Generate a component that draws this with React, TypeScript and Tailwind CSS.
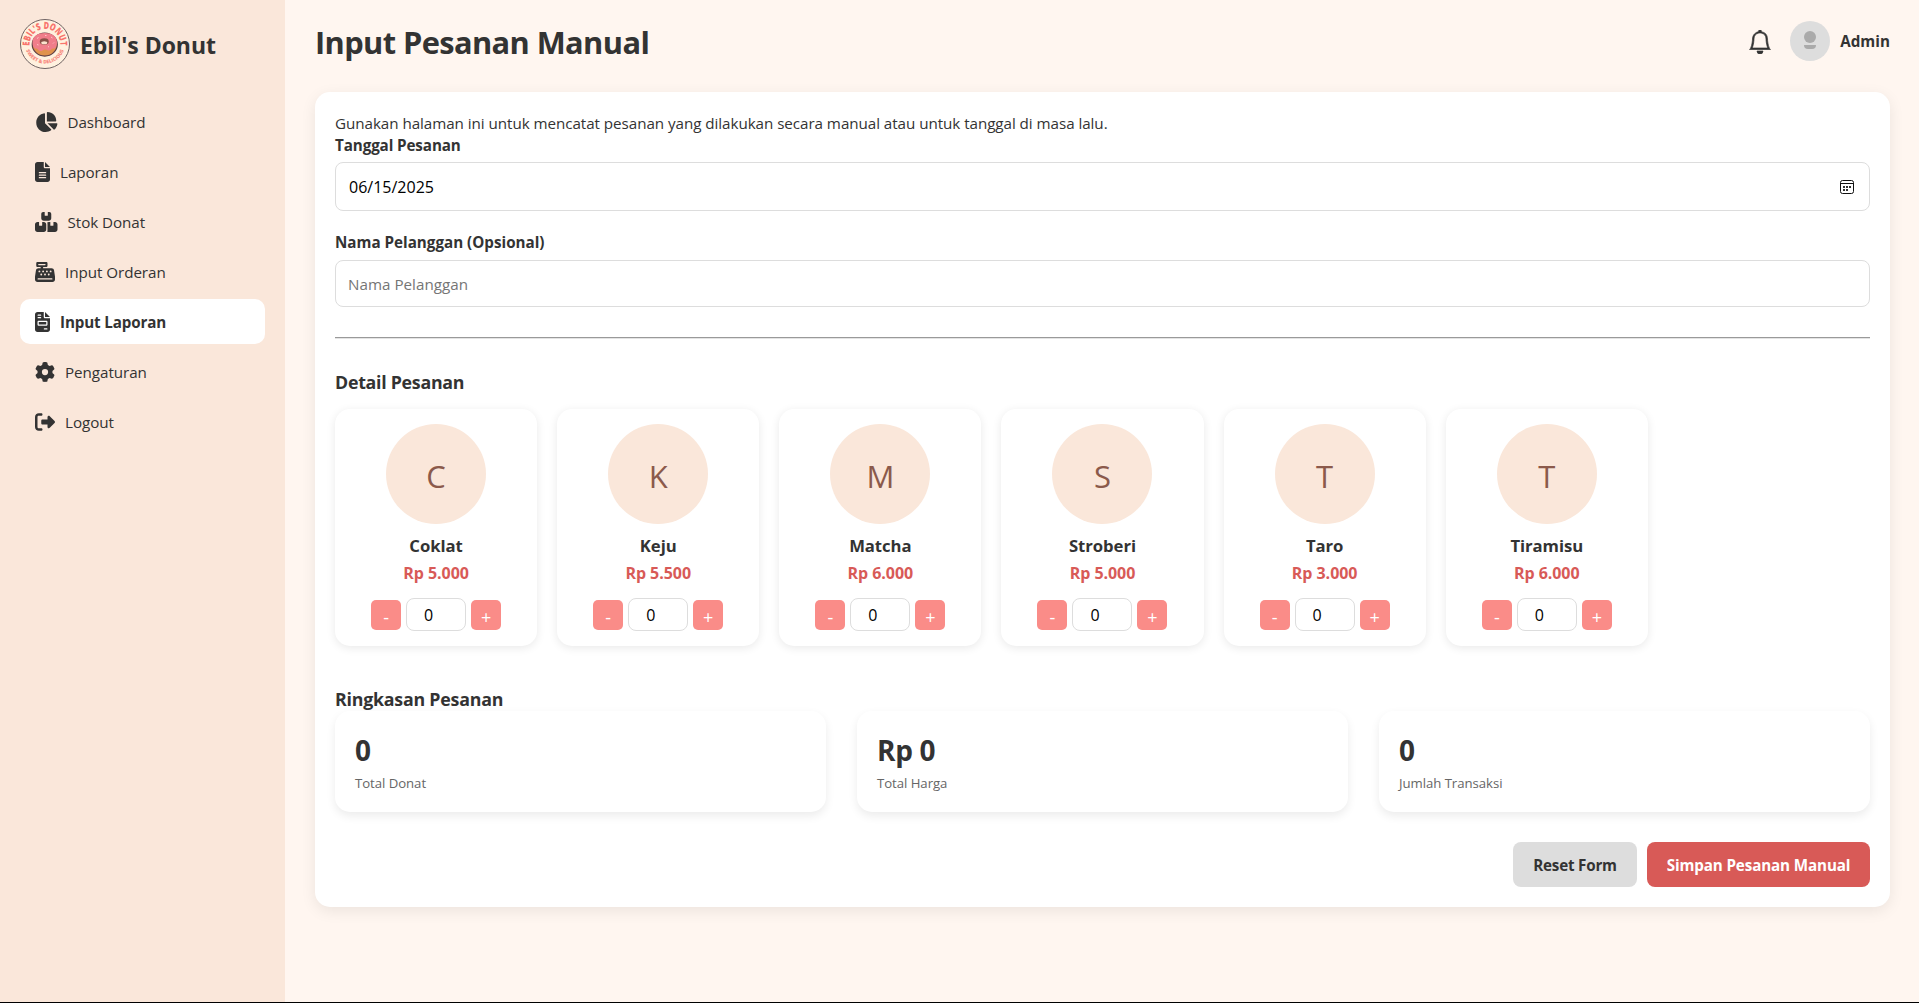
import { useState } from "react";
import {
  FaBoxesStacked,
  FaCashRegister,
  FaChartPie,
  FaFileInvoice,
  FaFileLines,
  FaGear,
  FaRightFromBracket,
} from "react-icons/fa6";
import { BsBell } from "react-icons/bs";

const NAV = [
  { label: "Dashboard", Icon: FaChartPie, width: "w-[22.5px]" },
  { label: "Laporan", Icon: FaFileLines, width: "w-[15px]" },
  { label: "Stok Donat", Icon: FaBoxesStacked, width: "w-[22.5px]" },
  { label: "Input Orderan", Icon: FaCashRegister, width: "w-5" },
  { label: "Input Laporan", Icon: FaFileInvoice, width: "w-[15px]", active: true },
  { label: "Pengaturan", Icon: FaGear, width: "w-5" },
  { label: "Logout", Icon: FaRightFromBracket, width: "w-5" },
];

const DONUTS = [
  { name: "Coklat", price: 5000 },
  { name: "Keju", price: 5500 },
  { name: "Matcha", price: 6000 },
  { name: "Stroberi", price: 5000 },
  { name: "Taro", price: 3000 },
  { name: "Tiramisu", price: 6000 },
];

const rupiah = (n: number) => "Rp " + n.toString().replace(/\B(?=(\d{3})+$)/g, ".");

function Logo() {
  return (
    <svg viewBox="0 0 100 100" className="size-[50px] shrink-0">
      <defs>
        <path id="arc-top" d="M19.500 54 A30.700 30.700 0 1 1 80.500 54" />
        <path id="arc-bottom" d="M11 58 A40 40 0 0 0 89 58" />
      </defs>
      <circle cx="50" cy="50" r="49" fill="#fff1df" stroke="#6f6363" strokeWidth="2" />
      <text fill="#f8746c" fontFamily="Open Sans, sans-serif" fontWeight="800" fontSize="19.5" textAnchor="middle">
        <textPath href="#arc-top" startOffset="50%" textLength="102" lengthAdjust="spacingAndGlyphs">EBIL'S DONUT</textPath>
      </text>
      <text fill="#f78a80" fontFamily="Open Sans, sans-serif" fontWeight="800" fontSize="10" textAnchor="middle">
        <textPath href="#arc-bottom" startOffset="50%" textLength="98" lengthAdjust="spacingAndGlyphs">SWEET &amp; DELICIOUS</textPath>
      </text>
      <ellipse cx="49.5" cy="51" rx="25" ry="23" fill="#e0924c" stroke="#5f4046" strokeWidth="2.5" />
      <path
        d="M25 47C25 34 36 28 49.5 28S74 34 74 47c0 7-3 13-7 12-4-1-5 4-9 4-4 0-5-3-9-2-4 1-5 4-9 3-4-1-4-5-8-5-4 0-7-5-7-12Z"
        fill="#f07d8a"
      />
      <ellipse cx="48.500" cy="45" rx="9" ry="6.500" fill="#8a5148" />
      <ellipse cx="48.500" cy="47.500" rx="6" ry="3" fill="#fbe3cf" />
      <path d="M34 39l3-2M62 36l3 2M66 49l2-2M34 51l3 1M50 33h3M56 56l2-1" stroke="#ffc4c4" strokeWidth="2" />
    </svg>
  );
}

function CalendarIcon() {
  return (
    <svg viewBox="0 0 14 14" className="size-3.5" fill="none" stroke="#111">
      <rect x=".5" y=".5" width="13" height="13" rx="2" />
      <path d="M1 3.500h12" />
      <path d="M3 7h2M6 7h2M9 7h2M3 10h2M6 10h2" strokeWidth="2" stroke="#333" />
    </svg>
  );
}

function StepButton({ label, onClick }: { label: string; onClick: () => void }) {
  return (
    <button
      onClick={onClick}
      className="mt-px flex size-[30px] items-center justify-center rounded-[5px] bg-[#fa8c88] pt-1 text-lg leading-none text-white"
    >
      {label}
    </button>
  );
}

export default function App() {
  const [qty, setQty] = useState<number[]>(DONUTS.map(() => 0));
  const step = (i: number, d: number) => setQty(qty.map((q, k) => (k === i ? Math.max(0, q + d) : q)));
  const total = qty.reduce((a, b) => a + b, 0);
  const sum = qty.reduce((a, q, i) => a + q * DONUTS[i].price, 0);
  const summary = [
    { value: String(total), label: "Total Donat" },
    { value: rupiah(sum), label: "Total Harga" },
    { value: "0", label: "Jumlah Transaksi" },
  ];

  return (
    <div className="flex h-screen overflow-hidden border-b border-black bg-[#fff6f0] font-['Open_Sans','Noto_Sans',sans-serif] text-[15.2px] tracking-[-0.05px] text-[#333]">
      <aside className="w-[285px] shrink-0 bg-[#fae7da] px-5 pt-[19px]">
        <div className="flex items-center gap-2.5">
          <Logo />
          <h2 className="pt-0.5 text-[23px] leading-[30px] font-bold">Ebil's Donut</h2>
        </div>
        <nav className="mt-[30px] flex flex-col gap-[5px]">
          {NAV.map(({ label, Icon, width, active }) => (
            <a
              key={label}
              className={`flex h-[45px] items-center gap-2.5 rounded-[10px] px-[15px] ${active ? "bg-white font-bold tracking-[-0.15px]" : ""}`}
            >
              <Icon className={`h-5 shrink-0 ${width}`} />
              <span className="pt-0.5">{label}</span>
            </a>
          ))}
        </nav>
      </aside>

      <main className="min-w-0 flex-1 pt-5 pr-[29px] pl-[30px]">
        <header className="flex h-[42px] items-center justify-between">
          <h1 className="pt-0.5 text-[30.8px] leading-10 font-bold tracking-[-0.6px]">Input Pesanan Manual</h1>
          <div className="flex items-center">
            <BsBell className="mt-0.5 size-6" strokeWidth={0.45} />
            <div className="ml-[18px] flex size-10 flex-col items-center gap-0.5 rounded-full bg-[#ddd] pt-2.5">
              <div className="size-3 rounded-full bg-[#aaa]" />
              <div className="h-1 w-3 rounded-b-full bg-[#aaa]" />
            </div>
            <span className="ml-2.5 pt-px font-bold tracking-[0.05px]">Admin</span>
          </div>
        </header>

        <section className="mt-[30px] rounded-[15px] bg-white p-5 shadow-[0_4px_15px_rgba(0,0,0,0.08)]">
          <p className="leading-[22px]">
            Gunakan halaman ini untuk mencatat pesanan yang dilakukan secara manual atau untuk tanggal di masa lalu.
          </p>
          <label className="block leading-[22px] font-bold tracking-[-0.1px]">Tanggal Pesanan</label>
          <div className="mt-1.5 flex h-[49px] items-center justify-between rounded-lg border border-[#ddd] pr-[15px] pl-[13px]">
            <span className="pt-px text-base tracking-normal text-black">06/15/2025</span>
            <CalendarIcon />
          </div>

          <label className="mt-5 block leading-[22px] font-bold tracking-normal">Nama Pelanggan (Opsional)</label>
          <input
            placeholder="Nama Pelanggan"
            className="mt-[7px] block h-[47px] w-full rounded-lg border border-[#ddd] px-3 pt-px tracking-[0.02px] outline-none placeholder:text-[#757575]"
          />

          <hr className="mt-[30px] h-0.5 border-t border-b border-t-[#9a9a9a] border-b-[#e4e4e4]" />

          <h3 className="mt-[31px] text-[17.8px] leading-[25px] font-bold tracking-[-0.27px]">Detail Pesanan</h3>
          <div className="mt-3.5 grid grid-cols-7 gap-5">
            {DONUTS.map((d, i) => (
              <div
                key={d.name}
                className="flex flex-col items-center rounded-[15px] bg-white py-[15px] shadow-[0_2px_10px_rgba(0,0,0,0.09)]"
              >
                <div className="flex size-[100px] items-center justify-center rounded-full bg-[#fae7da] pt-1 text-[31px] leading-none text-[#8b5a4b]">
                  {d.name[0]}
                </div>
                <div className="mt-[11px] text-[16.7px] leading-[22px] font-bold">{d.name}</div>
                <div className="mt-[5px] text-base leading-[22px] font-bold text-[#d85a57]">{rupiah(d.price)}</div>
                <div className="mt-3.5 flex gap-[5px]">
                  <div className="flex pt-px">
                    <StepButton label="-" onClick={() => step(i, -1)} />
                  </div>
                  <div className="flex h-[33px] w-[60px] items-center justify-center rounded-lg border border-[#ddd] pr-[15px] text-base text-black">
                    {qty[i]}
                  </div>
                  <div className="flex pt-px">
                    <StepButton label="+" onClick={() => step(i, 1)} />
                  </div>
                </div>
              </div>
            ))}
          </div>

          <h3 className="mt-[41px] text-[17.8px] leading-6 font-bold tracking-[-0.22px]">Ringkasan Pesanan</h3>
          <div className="grid grid-cols-3 gap-[31px]">
            {summary.map((s) => (
              <div key={s.label} className="h-[101px] rounded-[15px] bg-white p-5 shadow-[0_4px_10px_rgba(0,0,0,0.08)]">
                <div className="text-[28px] leading-[38px] font-bold tracking-[-0.3px]">{s.value}</div>
                <div className="mt-1 text-[13.2px] leading-5 text-[#666]">{s.label}</div>
              </div>
            ))}
          </div>

          <div className="mt-[30px] flex justify-end gap-2.5 font-bold tracking-[-0.12px]">
            <button
              onClick={() => setQty(DONUTS.map(() => 0))}
              className="h-[45px] w-[124px] rounded-lg bg-[#ddd] pt-px tracking-[-0.2px]"
            >
              Reset Form
            </button>
            <button className="h-[45px] w-[223px] rounded-lg bg-[#d85a57] pt-px text-white">Simpan Pesanan Manual</button>
          </div>
        </section>
      </main>
    </div>
  );
}
